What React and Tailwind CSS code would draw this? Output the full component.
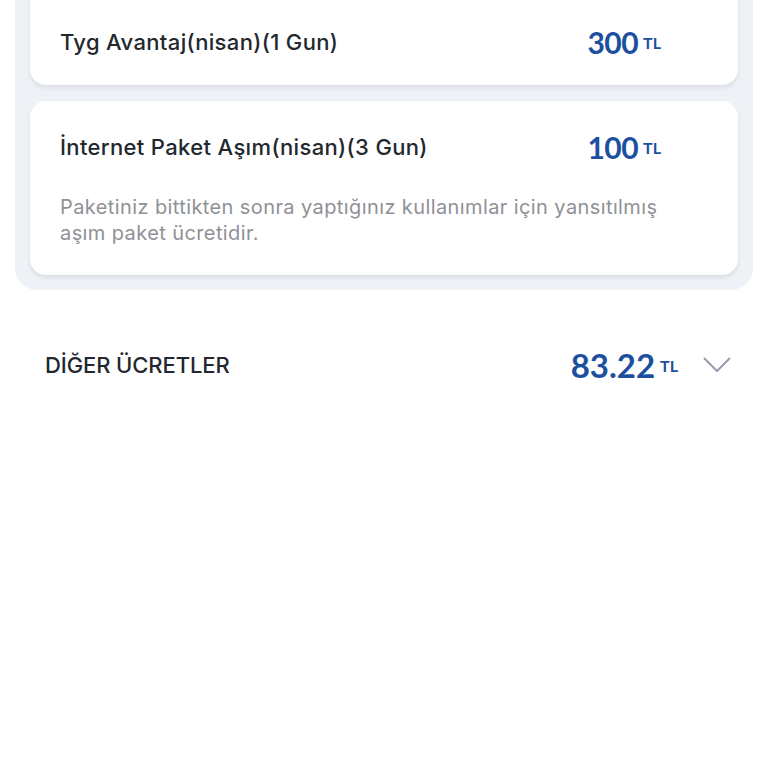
const font = { fontFamily: "Inter, Lato, sans-serif" };
const numFont = { fontFamily: "Lato, sans-serif" };

function Amount({ value, big }) {
  return (
    <div className="flex items-center gap-[5px] text-[#1d4f9f]" style={numFont}>
      <span className={big ? "text-[33px] font-bold leading-none" : "text-[30px] font-bold leading-none tracking-[-0.5px]"}>
        {value}
      </span>
      <span className="text-[16px] font-bold leading-none pt-[2px]">TL</span>
    </div>
  );
}

function ChargeCard({ title, amount, description, className }) {
  return (
    <div className={`rounded-[16px] bg-white pl-[30px] pr-[77px] shadow-[0_3px_4px_rgba(15,30,60,0.08)] ${className}`}>
      <div className="flex items-center justify-between h-[30px]">
        <p className="text-[22px] font-medium text-[#23272e] tracking-[0.35px]">{title}</p>
        <Amount value={amount} />
      </div>
      {description && (
        <p className="mt-[32px] text-[20px] leading-[26px] text-[#8f9196] max-w-[612px] tracking-[0.4px]">{description}</p>
      )}
    </div>
  );
}

export default function App() {
  return (
    <div className="h-screen overflow-hidden bg-white" style={font}>
      <div className="mx-[15px] -mt-[36px] rounded-[22px] bg-[#eef1f5] p-[15px] flex flex-col gap-[16px]">
        <ChargeCard className="pt-[48px] pb-[28px]" title="Tyg Avantaj(nisan)(1 Gun)" amount="300" />
        <ChargeCard
          className="pt-[31px] pb-[29px]"
          title="İnternet Paket Aşım(nisan)(3 Gun)"
          amount="100"
          description="Paketiniz bittikten sonra yaptığınız kullanımlar için yansıtılmış aşım paket ücretidir."
        />
      </div>
      <div className="mt-[58px] flex items-center justify-between pl-[45px] pr-[37px] h-[34px]">
        <p className="text-[22px] font-medium text-[#23272e] tracking-[-0.1px]">DİĞER ÜCRETLER</p>
        <div className="flex items-center gap-[25px]">
          <Amount value="83.22" big />
          <svg width="28" height="16" viewBox="0 0 28 16" fill="none" className="text-[#979eab]">
            <polyline points="1.5,1.5 14,14 26.5,1.5" stroke="currentColor" strokeWidth="2" strokeLinecap="round" strokeLinejoin="round" />
          </svg>
        </div>
      </div>
    </div>
  );
}
